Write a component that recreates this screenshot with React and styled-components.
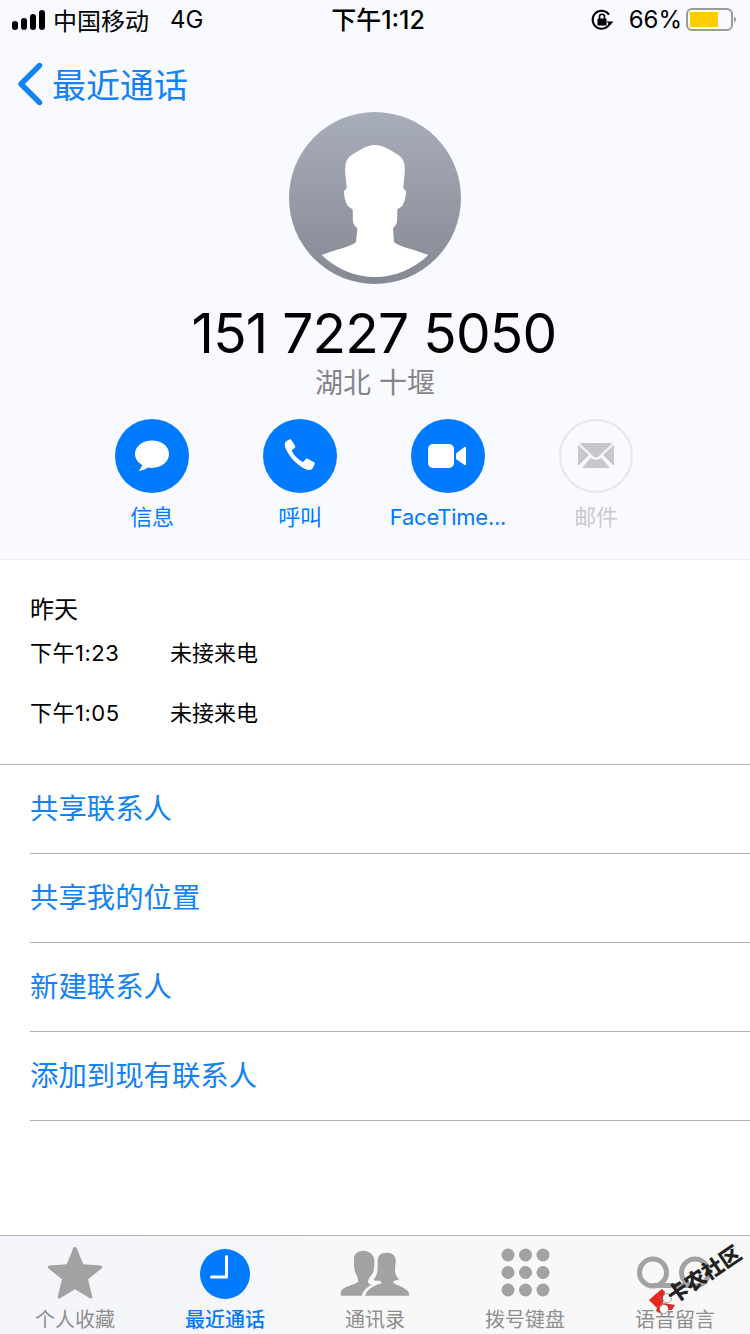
import React from "react";
import styled, { createGlobalStyle } from "styled-components";

const BLUE = "#007aff";
const LINK = "#1382f5";
const FONT = `Inter, "Noto Sans CJK SC", sans-serif`;

const GlobalStyle = createGlobalStyle`
  html, body { margin: 0; padding: 0; background: #fff; }
  * { box-sizing: border-box; }
`;

const Page = styled.div`
  position: relative;
  width: 750px;
  height: 1334px;
  display: flex;
  flex-direction: column;
  overflow: hidden;
  background: #fff;
  font-family: ${FONT};
`;

const Hero = styled.header`
  height: 560px;
  flex: none;
  display: flex;
  flex-direction: column;
  align-items: center;
  background: #f9faff;
  border-bottom: 1px solid #f0f0f3;
`;

const StatusBar = styled.div`
  position: relative;
  width: 100%;
  height: 40px;
  display: flex;
  align-items: center;
  justify-content: space-between;
  padding: 0 14px 0 12px;
  font-size: 24px;
  color: #000;
`;

const StatusGroup = styled.div`
  display: flex;
  align-items: center;
`;

const Carrier = styled.span`
  margin: -2px 0 0 7px;
`;

const Network = styled.span`
  margin: -2px 0 0 21px;
`;

const Clock = styled.span`
  position: absolute;
  left: 0;
  right: 0;
  top: 6px;
  text-align: center;
  font-size: 25px;
  font-weight: 500;
  line-height: 28px;
  padding-left: 6px;
`;

const Battery = styled.span`
  margin: -2px 4px 0 14px;
`;

const NavBar = styled.nav`
  width: 100%;
  height: 72px;
  flex: none;
  display: flex;
  align-items: center;
  padding: 15px 0 0 17px;
  gap: 9px;
  color: ${LINK};
  font-size: 34px;
`;

const Avatar = styled.svg`
  display: block;
  flex: none;
`;

const PhoneNumber = styled.h1`
  margin: 16px 2px 0 0;
  font-size: 55px;
  line-height: 66px;
  font-weight: 400;
  color: #000;
  letter-spacing: -0.75px;
`;

const Region = styled.div`
  font-size: 28px;
  line-height: 34px;
  color: #85858a;
`;

const Actions = styled.div`
  margin: 19px 2px 0 0;
  display: grid;
  grid-template-columns: repeat(4, 148px);
  justify-items: center;
`;

const Action = styled.div`
  display: flex;
  flex-direction: column;
  align-items: center;
  gap: 9px;
  color: ${(p) => (p.$disabled ? "#c7c7cc" : BLUE)};
  font-size: 22px;
  line-height: 30px;
  letter-spacing: -0.25px;
  white-space: nowrap;
`;

const ActionCircle = styled.div`
  width: 74px;
  height: 74px;
  border-radius: 50%;
  display: flex;
  align-items: center;
  justify-content: center;
  background: ${(p) => (p.$disabled ? "transparent" : BLUE)};
  border: ${(p) => (p.$disabled ? "2px solid #e6e7ec" : "none")};
`;

const History = styled.section`
  height: 205px;
  flex: none;
  padding: 35px 30px 0;
  border-bottom: 1px solid #b2b2b2;
  color: #000;
`;

const DayTitle = styled.div`
  font-size: 24px;
  line-height: 30px;
`;

const CallRow = styled.div`
  display: flex;
  align-items: center;
  height: 30px;
  margin-top: ${(p) => (p.$first ? "11px" : "30px")};
  font-size: 22px;
`;

const CallTime = styled.span`
  width: 140px;
  letter-spacing: 0.5px;
`;

const ActionList = styled.ul`
  list-style: none;
  margin: 0;
  padding: 0 0 0 30px;
`;

const ActionItem = styled.li`
  height: 89px;
  display: flex;
  align-items: center;
  padding-bottom: 5px;
  border-bottom: 1px solid #b2b2b2;
  color: ${LINK};
  font-size: 28.4px;
`;

const TabBar = styled.footer`
  margin-top: auto;
  height: 99px;
  flex: none;
  display: grid;
  grid-template-columns: repeat(5, 150px);
  border-top: 1px solid #b2b2b2;
  background: linear-gradient(90deg, #f3f5fa 0%, #f5f6fa 30%, #f8f8f8 45%);
`;

const Tab = styled.div`
  display: flex;
  flex-direction: column;
  align-items: center;
  justify-content: flex-end;
  color: ${(p) => (p.$active ? BLUE : "#8e8e8e")};
  font-size: 20px;
  line-height: 28px;
  font-weight: ${(p) => (p.$active ? 500 : 400)};
`;

const TabIcon = styled.svg`
  display: block;
  margin-bottom: 5px;
`;

const Watermark = styled.div`
  position: absolute;
  left: 648px;
  top: 1288px;
  height: 30px;
  display: flex;
  align-items: center;
  transform: rotate(-34deg);
  transform-origin: 15px 15px;
  color: #222;
  font-size: 21px;
  font-weight: 900;
  line-height: 30px;
  white-space: nowrap;
`;

const WatermarkText = styled.span`
  margin-left: -7px;
`;

function SignalIcon() {
  return (
    <svg width="34" height="20" viewBox="0 0 34 20">
      <rect x="0" y="11" width="6" height="9" rx="3" fill="#000" />
      <rect x="9" y="8" width="6" height="12" rx="3" fill="#000" />
      <rect x="18" y="4" width="6" height="16" rx="3" fill="#000" />
      <rect x="27" y="0" width="6" height="20" rx="3" fill="#000" />
    </svg>
  );
}

function RotationLockIcon() {
  return (
    <svg width="24" height="22" viewBox="0 0 24 22">
      <path d="M19.2 13.5A9 9 0 1 1 18 5.6" fill="none" stroke="#000" strokeWidth="2" />
      <path d="M15.5 12.5h7l-3.5 3.8z" fill="#000" />
      <rect x="6.5" y="9.5" width="9" height="7" rx="1" fill="#000" />
      <path d="M8.5 10V7.8a2.5 2.5 0 0 1 5 0V10" fill="none" stroke="#000" strokeWidth="1.6" />
    </svg>
  );
}

function BatteryIcon() {
  return (
    <svg width="50" height="24" viewBox="0 0 50 24">
      <rect x="1" y="1" width="45" height="21" rx="5" fill="none" stroke="#9a9a9a" strokeWidth="2" />
      <rect x="4" y="4" width="28" height="15" fill="#ffcc00" />
      <path d="M48 8.5c1.5.6 2 1.6 2 3s-.5 2.4-2 3z" fill="#9a9a9a" />
    </svg>
  );
}

function BackIcon() {
  return (
    <svg width="26" height="44" viewBox="0 0 26 44">
      <path d="M22.5 3.5 4 22l18.5 18.5" fill="none" stroke={LINK} strokeWidth="5.4" strokeLinecap="round" strokeLinejoin="round" />
    </svg>
  );
}

function AvatarImage() {
  return (
    <Avatar width="172" height="172" viewBox="0 0 172 172">
      <defs>
        <linearGradient id="avatarFill" x1="0" y1="0" x2="0" y2="1">
          <stop offset="0" stopColor="#a8adba" />
          <stop offset="1" stopColor="#858993" />
        </linearGradient>
        <clipPath id="avatarClip">
          <circle cx="86" cy="86" r="86" />
        </clipPath>
      </defs>
      <circle cx="86" cy="86" r="86" fill="url(#avatarFill)" />
      <path
        clipPath="url(#avatarClip)"
        fill="#fff"
        d="M86 33C79 33 72 37 66 41C60 44 57 48 56.5 53C55.500 60 57 68 57.800 76L55 79C55 84 56 89 58.300 93C60 96 63 96 63.700 98C64 103 63.500 108 64.300 111C65 114 68 115 68.300 117L67 130C62 135 47 137 32.700 143C47 157 66 165 86 165C106 165 125 157 139.300 143C125 137 110 135 105 130L104 117C104 115 107 114 107.700 111C108.500 108 108 103 108.300 98C109 96 112 96 113.700 93C116 89 117 84 117 79L114.200 76C115 68 116.500 60 115.500 53C115 48 112 44 106 41C100 37 93 33 86 33Z"
      />
    </Avatar>
  );
}

function MessageIcon() {
  return (
    <svg width="36" height="34" viewBox="0 0 36 34">
      <path fill="#fff" d="M18 1.500C8.400 1.500 1 7.600 1 15c0 4.600 2.900 8.500 7.200 11-.4 1.800-1.600 3.600-2.900 4.800-.4.400 0 1 .6.900 3.200-.4 6-1.500 8.100-3.100 1.300.2 2.600.3 4 .3 9.600 0 17-6.100 17-13.900S27.600 1.500 18 1.500Z" />
    </svg>
  );
}

function PhoneIcon() {
  return (
    <svg width="34" height="34" viewBox="0 0 34 34">
      <path fill="#fff" d="M3.200 2.300 6.300.6c.9-.5 1.800-.2 2.300.6l3.400 5.500c.5.800.3 1.700-.4 2.300L9.200 10.800c-.4.400-.5.800-.2 1.400 1 2 2.600 4.300 4.600 6.300 2 2 3.900 3.300 5.700 4.300.5.300 1 .2 1.400-.2l1.900-2.300c.6-.7 1.500-.9 2.300-.4l5.900 3.200c.8.500 1.200 1.400.7 2.300l-1.700 3.700c-.7 1.400-2.400 2.300-4.200 1.900-4.400-1-9.100-3.900-13.300-8C7.600 18.300 3.900 13.200 2.200 8.200 1.500 6 1.800 3.300 3.200 2.300Z" />
    </svg>
  );
}

function VideoIcon() {
  return (
    <svg width="40" height="24" viewBox="0 0 40 24">
      <rect x="0" y="0" width="26" height="24" rx="5" fill="#fff" />
      <path fill="#fff" d="M28 9.500 36.500 3c.7-.5 1.500-.1 1.500.7v16.600c0 .8-.8 1.200-1.500.7L28 15Z" />
    </svg>
  );
}

function MailIcon() {
  return (
    <svg width="36" height="26" viewBox="0 0 36 26">
      <path fill="#c7c7cc" d="M1 0h34L20.500 13.500c-1.500 1.300-3.500 1.300-5 0Z" />
      <path fill="#c7c7cc" d="M0 1.500V23l11-11Z" />
      <path fill="#c7c7cc" d="M36 1.500V23L25 12Z" />
      <path fill="#c7c7cc" d="M4 25h28L23.500 15c-3 2.300-8 2.300-11 0Z" />
    </svg>
  );
}

function StarIcon() {
  return (
    <TabIcon width="56" height="54" viewBox="0 0 56 54">
      <path fill="#a2a2a2" d="M28 0c1 0 1.600.6 2 1.700l6.300 15.500 17.100 1.300c1.100.1 1.900.7 1.900 1.500 0 .6-.3 1.100-.9 1.600L41 32.300l4.200 16.900c.2 1.200-.2 2.300-1.200 2.300-.5 0-1-.2-1.600-.6L28 42.200 13.600 50.900c-.6.400-1.100.6-1.600.6-1 0-1.400-1.100-1.200-2.300L15 32.300 1.600 21.600c-.6-.5-.9-1-.9-1.600 0-.8.800-1.400 1.900-1.500l17.100-1.300L26 1.700C26.400.6 27 0 28 0Z" />
    </TabIcon>
  );
}

function ClockIcon() {
  return (
    <TabIcon width="50" height="54" viewBox="0 0 50 54">
      <circle cx="25" cy="27" r="25" fill={BLUE} />
      <path d="M26.500 9.500V30H11.500" fill="none" stroke="#fff" strokeWidth="3" strokeLinejoin="round" strokeLinecap="round" />
    </TabIcon>
  );
}

function ContactsIcon() {
  return (
    <TabIcon width="70" height="54" viewBox="0 0 70 54">
      <path fill="#a2a2a2" d="M23.300 3.700C18 3.700 14 7 14 11.300C13.800 16 14 21 15 24.700C15.800 27 18 29 18.300 34.700C14 38 5 39 1.700 43C.8 44.500.7 46.500.7 48.700H21.700C23 44 27 40 31.700 38C29.500 37 28.300 36.500 28 34.700C28.500 30 32.500 28 33.300 24.700C34.300 21 34.600 17 34.300 13C33.800 7.500 29 3.700 23.300 3.700Z" />
      <path fill="#a2a2a2" d="M46.700 5.700C41 5.700 38 8.500 37.700 13C37.300 17 38 21 37.300 24.700C36.800 28 35 31 33.300 33C35.500 34 38 34 40 33.700C41 34.500 41.500 35.500 41.700 36.300C35 38.500 27 41.500 25 48.700H69C69 46.500 69 45.500 68.300 44.700C65 40.500 58 38.500 53.300 36.300C53.300 35.500 53.500 34.500 54 33.700C56 33.700 58 33 59 32.300C56.500 30 55 27 55 23C55 19 56 16 55.700 13C55.300 8 52 5.700 46.700 5.700Z" />
    </TabIcon>
  );
}

function KeypadIcon() {
  const dots = [];
  [0, 1, 2].forEach((r) =>
    [0, 1, 2].forEach((c) =>
      dots.push(<circle key={`${r}-${c}`} cx={7 + c * 17.500} cy={8 + r * 17.500} r="6.500" fill="#a2a2a2" />)
    )
  );
  return (
    <TabIcon width="49" height="54" viewBox="0 0 49 54">
      {dots}
    </TabIcon>
  );
}

function VoicemailIcon() {
  return (
    <TabIcon width="76" height="54" viewBox="0 0 76 54">
      <circle cx="16" cy="25.500" r="13.500" fill="none" stroke="#a2a2a2" strokeWidth="5" />
      <circle cx="58" cy="25.500" r="13.500" fill="none" stroke="#a2a2a2" strokeWidth="5" />
      <path d="M16 38.500h42" stroke="#a2a2a2" strokeWidth="5" />
    </TabIcon>
  );
}

function WatermarkLogo() {
  return (
    <svg width="30" height="30" viewBox="0 0 30 30">
      <g transform="rotate(34 15 15)">
        <path fill="#e5281e" d="M1 12 9 5 15 15 9 20Z" />
        <path fill="#e5281e" d="M9 5 14 1 17 4 15 15Z" />
        <path fill="#e5281e" d="M15 15 27 17 24 22 17 22Z" />
        <path fill="#e5281e" d="M9 20 15 15 12 25 8 23Z" />
        <circle cx="19" cy="10" r="4.500" fill="#fff" stroke="#222" strokeWidth="0.7" strokeDasharray="1.500 1" />
        <circle cx="16" cy="21" r="4.500" fill="#fff" stroke="#222" strokeWidth="0.7" strokeDasharray="1.500 1" />
      </g>
    </svg>
  );
}

const ACTIONS = [
  { label: "信息", icon: <MessageIcon /> },
  { label: "呼叫", icon: <PhoneIcon /> },
  { label: "FaceTime...", icon: <VideoIcon /> },
  { label: "邮件", icon: <MailIcon />, disabled: true },
];

const CALLS = [
  { time: "下午1:23", status: "未接来电" },
  { time: "下午1:05", status: "未接来电" },
];

const LINKS = ["共享联系人", "共享我的位置", "新建联系人", "添加到现有联系人"];

const TABS = [
  { label: "个人收藏", icon: <StarIcon /> },
  { label: "最近通话", icon: <ClockIcon />, active: true },
  { label: "通讯录", icon: <ContactsIcon /> },
  { label: "拨号键盘", icon: <KeypadIcon /> },
  { label: "语音留言", icon: <VoicemailIcon /> },
];

export default function App() {
  return (
    <Page>
      <GlobalStyle />
      <Hero>
        <StatusBar>
          <StatusGroup>
            <SignalIcon />
            <Carrier>中国移动</Carrier>
            <Network>4G</Network>
          </StatusGroup>
          <Clock>下午1:12</Clock>
          <StatusGroup>
            <RotationLockIcon />
            <Battery>66%</Battery>
            <BatteryIcon />
          </StatusGroup>
        </StatusBar>
        <NavBar>
          <BackIcon />
          <span>最近通话</span>
        </NavBar>
        <AvatarImage />
        <PhoneNumber>151 7227 5050</PhoneNumber>
        <Region>湖北 十堰</Region>
        <Actions>
          {ACTIONS.map((a) => (
            <Action key={a.label} $disabled={a.disabled}>
              <ActionCircle $disabled={a.disabled}>{a.icon}</ActionCircle>
              <span>{a.label}</span>
            </Action>
          ))}
        </Actions>
      </Hero>
      <History>
        <DayTitle>昨天</DayTitle>
        {CALLS.map((c, i) => (
          <CallRow key={c.time} $first={i === 0}>
            <CallTime>{c.time}</CallTime>
            <span>{c.status}</span>
          </CallRow>
        ))}
      </History>
      <ActionList>
        {LINKS.map((l) => (
          <ActionItem key={l}>{l}</ActionItem>
        ))}
      </ActionList>
      <TabBar>
        {TABS.map((t) => (
          <Tab key={t.label} $active={t.active}>
            {t.icon}
            <span>{t.label}</span>
          </Tab>
        ))}
      </TabBar>
      <Watermark>
        <WatermarkLogo />
        <WatermarkText>卡农社区</WatermarkText>
      </Watermark>
    </Page>
  );
}
